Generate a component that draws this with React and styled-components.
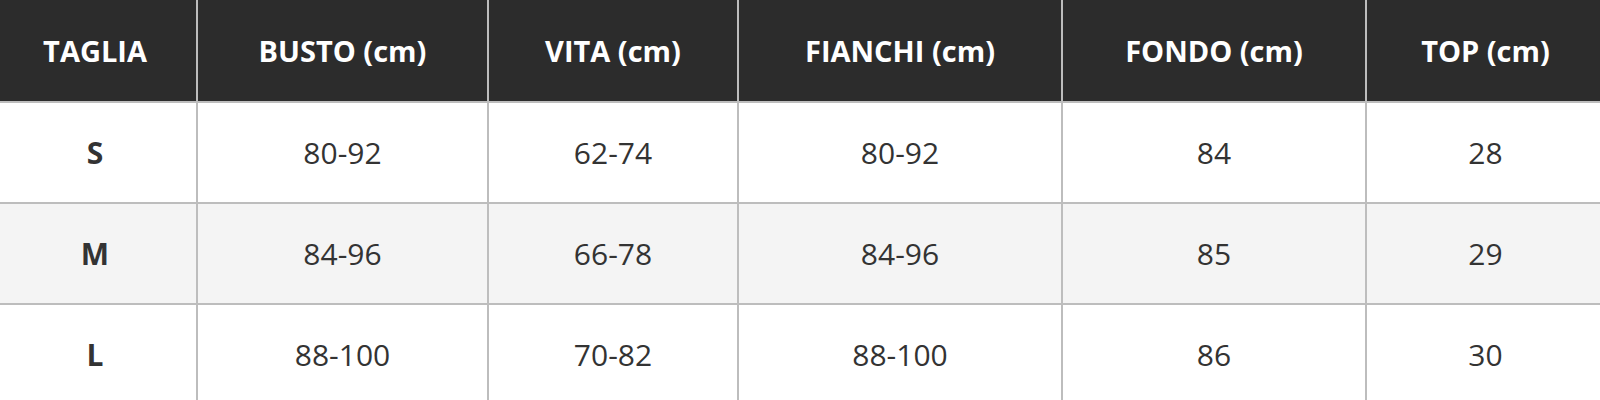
import styled, { createGlobalStyle } from "styled-components";

const GlobalStyle = createGlobalStyle`
  html, body {
    margin: 0;
    padding: 0;
    background: #ffffff;
    overflow: hidden;
  }
`;

const COLUMNS = [
  { label: "TAGLIA", width: 203 },
  { label: "BUSTO (cm)", width: 291 },
  { label: "VITA (cm)", width: 250 },
  { label: "FIANCHI (cm)", width: 324 },
  { label: "FONDO (cm)", width: 304 },
  { label: "TOP (cm)", width: 238 },
];

const ROWS = [
  ["S", "80-92", "62-74", "80-92", "84", "28"],
  ["M", "84-96", "66-78", "84-96", "85", "29"],
  ["L", "88-100", "70-82", "88-100", "86", "30"],
];

const Table = styled.table`
  width: 1610px;
  margin-left: -6px;
  table-layout: fixed;
  border-collapse: collapse;
  font-family: "Open Sans", "Noto Sans", sans-serif;
  color: #333333;
`;

const HeadCell = styled.th`
  height: 101px;
  padding: 0;
  background: #2c2c2c;
  color: #ffffff;
  font-size: 29px;
  font-weight: 700;
  text-align: center;
  vertical-align: middle;
  border-right: 2px solid #bdbdbd;
  border-bottom: 2px solid #bdbdbd;

  &:last-child {
    border-right: none;
  }
`;

const Row = styled.tr`
  background: ${({ $alt }) => ($alt ? "#f4f4f4" : "#ffffff")};
`;

const Cell = styled.td`
  height: 99px;
  padding: 0;
  font-size: 30px;
  font-weight: ${({ $bold }) => ($bold ? 700 : 400)};
  text-align: center;
  vertical-align: middle;
  border-right: 2px solid #bdbdbd;
  border-bottom: 2px solid #bdbdbd;

  &:last-child {
    border-right: none;
  }
`;

export default function App() {
  return (
    <>
      <GlobalStyle />
      <Table>
        <colgroup>
          {COLUMNS.map((col) => (
            <col key={col.label} style={{ width: col.width }} />
          ))}
        </colgroup>
        <thead>
          <tr>
            {COLUMNS.map((col) => (
              <HeadCell key={col.label}>{col.label}</HeadCell>
            ))}
          </tr>
        </thead>
        <tbody>
          {ROWS.map((row, i) => (
            <Row key={row[0]} $alt={i % 2 === 1}>
              {row.map((value, j) => (
                <Cell key={j} $bold={j === 0}>
                  {value}
                </Cell>
              ))}
            </Row>
          ))}
        </tbody>
      </Table>
    </>
  );
}
